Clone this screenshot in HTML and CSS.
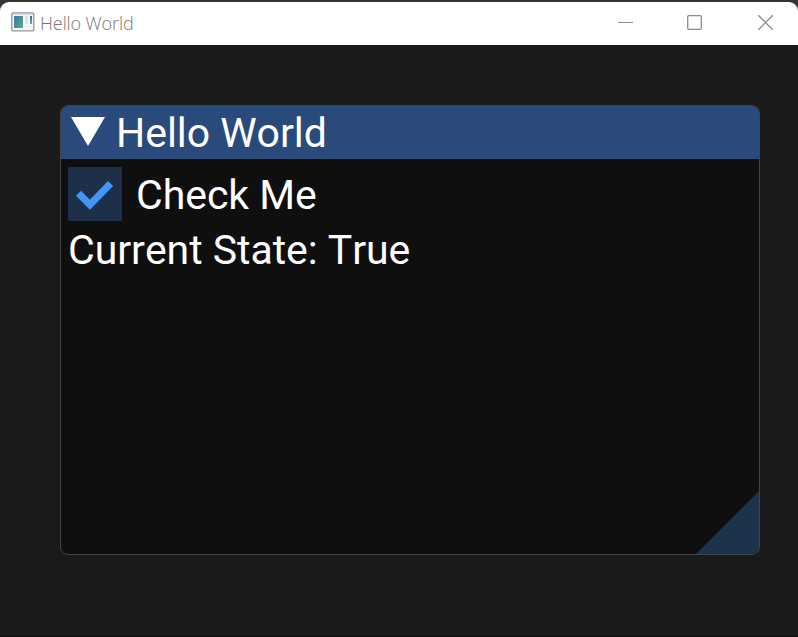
FILE: index.html
```html
<!DOCTYPE html>
<html lang="en">
<head>
<meta charset="utf-8">
<title>Hello World</title>
<link rel="stylesheet" href="styles.css">
</head>
<body>
<div class="window">
  <header class="titlebar">
    <svg class="app-icon" width="24" height="20" viewBox="0 0 24 20">
      <defs>
        <linearGradient id="pane" x1="0" y1="0" x2="1" y2="1">
          <stop offset="0" stop-color="#4679a8"/><stop offset=".5" stop-color="#469298"/><stop offset="1" stop-color="#58b287"/>
        </linearGradient>
        <linearGradient id="strip" x1="0" y1="0" x2="0" y2="1">
          <stop offset="0" stop-color="#3c689f"/><stop offset="1" stop-color="#62b68c"/>
        </linearGradient>
      </defs>
      <rect x=".8" y=".8" width="22" height="18" rx="1" fill="#f5f6f8" stroke="#92969d" stroke-width="1.3"/>
      <path d="M2 2.5h20" stroke="#d4d9e1"/>
      <rect x="3" y="4" width="9" height="12" fill="url(#pane)"/>
      <rect x="14" y="4" width="3" height="8" fill="#e2e4e8"/>
      <rect x="19" y="4" width="2" height="8" fill="url(#strip)"/>
      <path d="M14 14.5h7" stroke="#e8eaee"/>
    </svg>
    <span class="caption">Hello World</span>
    <svg class="controls" width="158" height="18" viewBox="0 0 158 18" fill="none" stroke="#8c8c8c" stroke-width="1.3">
      <path d="M0 9.5h15" stroke-width="1"/>
      <rect x="69.7" y="2.7" width="13.6" height="13.6" rx="1"/>
      <path d="M140.300 2.300l14.500 14.500M154.800 2.300l-14.500 14.500"/>
    </svg>
  </header>
  <main class="viewport">
    <section class="panel">
      <div class="panel-title">
        <svg class="arrow" width="34" height="29" viewBox="0 0 34 29"><path d="M0 0h34L17 29z" fill="#fff"/></svg>
        <span class="heading">Hello World</span>
      </div>
      <div class="panel-body">
        <label class="check-row">
          <svg width="54" height="54" viewBox="0 0 54 54">
            <rect width="54" height="54" fill="#1d2f49"/>
            <path d="M10.500 26.300l11.400 11.400L42.600 16.500" fill="none" stroke="#4296fa" stroke-width="7.200"/>
          </svg>
          <span class="check-label">Check Me</span>
        </label>
        <div class="state">Current State: True</div>
      </div>
      <div class="grip"></div>
    </section>
  </main>
</div>
</body>
</html>
```

FILE: styles.css
```css
* { box-sizing: border-box; }
body { margin: 0; background: #363435; }
.window {
  display: flex;
  flex-direction: column;
  height: 637px;
  padding-top: 2px;
}
.titlebar {
  display: flex;
  flex: none;
  align-items: center;
  height: 43px;
  padding: 0 22px 0 11px;
  background: #fff;
  border-radius: 9px 9px 0 0;
}
.app-icon { margin-top: -4px; }
.caption {
  margin: -2px 0 0 5px;
  color: #777;
  font: 300 18px/24px "Open Sans", sans-serif;
  letter-spacing: -0.1px;
}
.controls { margin: -3px 0 0 auto; }
.viewport {
  flex: 1;
  padding: 60px 38px 81px 60px;
  background: #1a1a1a;
  border-bottom: 1px solid #0d0d0d;
}
.panel {
  position: relative;
  height: 450px;
  overflow: hidden;
  border: 1px solid #434347;
  border-radius: 8px;
  background: #0f0f0f;
  color: #fff;
  font: 41px/54px Roboto, sans-serif;
  font-kerning: none;
  letter-spacing: -0.04px;
  white-space: nowrap;
}
.panel-title {
  display: flex;
  align-items: center;
  height: 53px;
  padding-left: 10px;
  background: #294a7a;
}
.arrow { margin-top: -3px; }
.heading { margin-left: 11px; }
.panel-body { padding: 8px 7px; }
.check-row { display: flex; align-items: center; height: 54px; }
.check-label { margin-left: 14px; padding-top: 2px; }
.state { margin-top: 2px; }
.grip {
  position: absolute;
  right: 0;
  bottom: 0;
  width: 63px;
  height: 63px;
  background: #1d334c;
  clip-path: polygon(100% 0, 100% 100%, 0 100%);
}
```
